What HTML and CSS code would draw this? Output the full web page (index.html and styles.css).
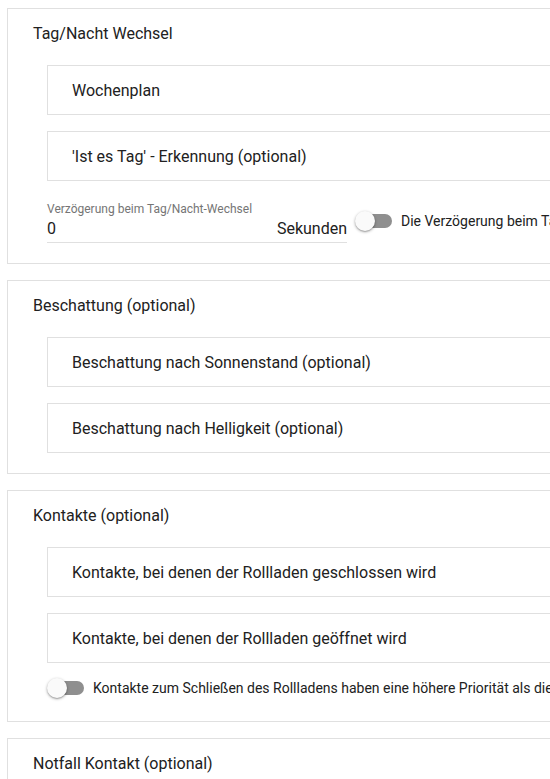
FILE: index.html
```html
<!DOCTYPE html>
<html lang="de">
<head>
<meta charset="utf-8">
<title>Rollladen</title>
<link rel="stylesheet" href="styles.css">
</head>
<body>
<div class="page">
  <section class="card">
    <div class="card-title">Tag/Nacht Wechsel</div>
    <div class="panel">Wochenplan</div>
    <div class="panel">'Ist es Tag' - Erkennung (optional)</div>
    <div class="field-row">
      <div class="field">
        <label class="field-label">Verzögerung beim Tag/Nacht-Wechsel</label>
        <div class="field-input">
          <span class="field-value">0</span>
          <span class="field-suffix">Sekunden</span>
        </div>
      </div>
      <div class="toggle-row">
        <span class="switch"><span class="switch-track"></span><span class="switch-thumb"></span></span>
        <span class="toggle-label">Die Verzögerung beim Tag/Nacht-Wechsel gilt nur für das Schließen des Rollladens</span>
      </div>
    </div>
  </section>

  <section class="card">
    <div class="card-title">Beschattung (optional)</div>
    <div class="panel">Beschattung nach Sonnenstand (optional)</div>
    <div class="panel">Beschattung nach Helligkeit (optional)</div>
  </section>

  <section class="card">
    <div class="card-title">Kontakte (optional)</div>
    <div class="panel">Kontakte, bei denen der Rollladen geschlossen wird</div>
    <div class="panel">Kontakte, bei denen der Rollladen geöffnet wird</div>
    <div class="toggle-row toggle-row--block">
      <span class="switch"><span class="switch-track"></span><span class="switch-thumb"></span></span>
      <span class="toggle-label">Kontakte zum Schließen des Rollladens haben eine höhere Priorität als die Kontakte zum Öffnen</span>
    </div>
  </section>

  <section class="card">
    <div class="card-title">Notfall Kontakt (optional)</div>
    <div class="panel">Notfall Kontakt</div>
  </section>
</div>
</body>
</html>
```

FILE: styles.css
```css
html, body {
  margin: 0;
  padding: 0;
  overflow: hidden;
  background: #ffffff;
}

body {
  font-family: Roboto, "Noto Sans", Arial, sans-serif;
  color: #212121;
}

.page {
  width: 1100px;
  padding: 8px 0 0 7px;
  display: flex;
  flex-direction: column;
  gap: 16px;
}

.card {
  border: 1px solid #e0e0e0;
  padding: 13px 0 20px 25px;
  display: flex;
  flex-direction: column;
}

.card-title {
  font-size: 16px;
  line-height: 24px;
  margin-bottom: 19px;
}

.panel {
  margin-left: 14px;
  height: 48px;
  border: 1px solid #e0e0e0;
  padding-left: 24px;
  display: flex;
  align-items: center;
  font-size: 16px;
  white-space: nowrap;
}

.panel + .panel {
  margin-top: 16px;
}

.field-row {
  margin-left: 14px;
  margin-top: 21px;
  display: flex;
  align-items: center;
  gap: 8px;
}

.field {
  width: 300px;
  display: flex;
  flex-direction: column;
}

.field-label {
  font-size: 12px;
  line-height: 14px;
  color: #757575;
}

.field-input {
  display: flex;
  align-items: center;
  justify-content: space-between;
  height: 26px;
  border-bottom: 1px solid #e0e0e0;
  font-size: 16px;
}

.field-value {
  line-height: 24px;
}

.field-suffix {
  line-height: 24px;
}

.toggle-row {
  display: flex;
  align-items: center;
  gap: 9px;
  white-space: nowrap;
  margin-top: -4px;
}

.toggle-row--block {
  margin-left: 14px;
  margin-top: 13px;
  margin-bottom: 1px;
  height: 24px;
}

.switch {
  position: relative;
  width: 37px;
  height: 20px;
  flex: none;
}

.switch-track {
  position: absolute;
  left: 3px;
  top: 3px;
  width: 34px;
  height: 14px;
  border-radius: 7px;
  background: #8f8f8f;
}

.switch-thumb {
  position: absolute;
  left: 0;
  top: 0;
  width: 20px;
  height: 20px;
  border-radius: 50%;
  background: #fafafa;
  box-shadow: 0 1px 3px rgba(0, 0, 0, 0.35), 0 1px 1px rgba(0, 0, 0, 0.14);
}

.toggle-label {
  font-size: 14px;
  line-height: 20px;
}
```
